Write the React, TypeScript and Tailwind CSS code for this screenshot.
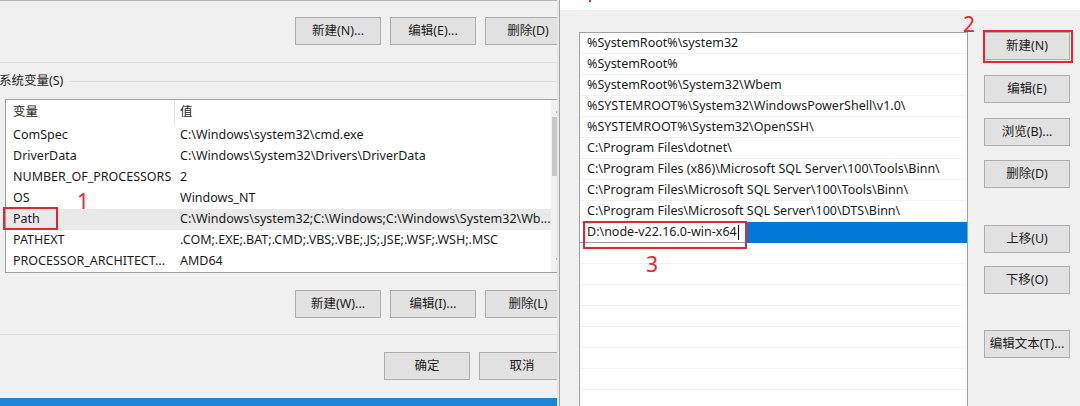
import React from 'react'

const sysVars: [string, string][] = [
  ['ComSpec', 'C:\\Windows\\system32\\cmd.exe'],
  ['DriverData', 'C:\\Windows\\System32\\Drivers\\DriverData'],
  ['NUMBER_OF_PROCESSORS', '2'],
  ['OS', 'Windows_NT'],
  ['Path', 'C:\\Windows\\system32;C:\\Windows;C:\\Windows\\System32\\Wb...'],
  ['PATHEXT', '.COM;.EXE;.BAT;.CMD;.VBS;.VBE;.JS;.JSE;.WSF;.WSH;.MSC'],
  ['PROCESSOR_ARCHITECT...', 'AMD64'],
]

const paths = [
  '%SystemRoot%\\system32',
  '%SystemRoot%',
  '%SystemRoot%\\System32\\Wbem',
  '%SYSTEMROOT%\\System32\\WindowsPowerShell\\v1.0\\',
  '%SYSTEMROOT%\\System32\\OpenSSH\\',
  'C:\\Program Files\\dotnet\\',
  'C:\\Program Files (x86)\\Microsoft SQL Server\\100\\Tools\\Binn\\',
  'C:\\Program Files\\Microsoft SQL Server\\100\\Tools\\Binn\\',
  'C:\\Program Files\\Microsoft SQL Server\\100\\DTS\\Binn\\',
]

function Btn({ label, className = '' }: { label: string; className?: string }) {
  return (
    <div
      className={`flex h-[28px] w-[86px] shrink-0 items-center justify-center border border-[#adadad] bg-[#e1e1e1] text-[12.5px] text-[#1b1b1b] ${className}`}
    >
      {label}
    </div>
  )
}

function Mark({ n, className }: { n: string; className: string }) {
  return (
    <span className={`absolute text-[21px] leading-none text-[#e5262c] ${className}`}>{n}</span>
  )
}

export default function App() {
  return (
    <div className="relative flex h-[406px] w-[1080px] overflow-hidden bg-[#f0f0f0] font-['Noto_Sans','Noto_Sans_CJK_SC',sans-serif] text-[12.5px] text-[#1b1b1b]">
      {/* left: environment variables dialog */}
      <div className="flex h-[406px] w-[557px] shrink-0 flex-col overflow-hidden border-t border-[#b4b4b4]">
        <div className="flex w-[600px] flex-1 flex-col">
          <div className="mt-[16px] flex shrink-0 gap-[9px] pl-[295px]">
            <Btn label="新建(N)..." className="h-[27px]" />
            <Btn label="编辑(E)..." className="h-[27px]" />
            <Btn label="删除(D)" className="h-[27px]" />
          </div>
          <div className="mt-[17px] h-px shrink-0 bg-[#dedede]" />
          <div className="mt-[10px] flex h-[16px] shrink-0 items-center">
            <span className="ml-[-1px] whitespace-nowrap leading-[16px]">系统变量(S)</span>
            <div className="ml-[6px] h-px flex-1 bg-[#dcdcdc]" />
          </div>

          <div className="ml-[5px] mt-[10px] flex h-[174px] w-[566px] shrink-0 border border-[#a0a0a0] bg-white">
            <div className="w-[545px] shrink-0">
              <div className="flex h-[25px] items-center">
                <div className="w-[168px] pl-[7px]">变量</div>
                <div className="h-full w-px bg-[#e5e5e5]" />
                <div className="pl-[5px]">值</div>
              </div>
              {sysVars.map(([k, v]) => (
                <div
                  key={k}
                  className={`flex h-[21px] items-center whitespace-nowrap ${k === 'Path' ? 'bg-[#e9e9e9]' : ''}`}
                >
                  <div className="w-[169px] pl-[7px]">{k}</div>
                  <div className="pl-[5px]">{v}</div>
                </div>
              ))}
            </div>
            <div className="flex w-[17px] flex-col bg-[#f0f0f0]">
              <div className="flex h-[17px] items-end justify-center pb-[4px]">
                <svg width="8" height="5" viewBox="0 0 8 5">
                  <path d="M0.5 4.5 L4 1 L7.5 4.5" stroke="#606060" fill="none" strokeWidth="1.2" />
                </svg>
              </div>
              <div className="mx-[1px] h-[59px] bg-[#c8c8c8]" />
              <div className="flex-1" />
              <div className="flex h-[17px] items-start justify-center pt-[3px]">
                <svg width="8" height="5" viewBox="0 0 8 5">
                  <path d="M0.5 0.5 L4 4 L7.5 0.5" stroke="#606060" fill="none" strokeWidth="1.2" />
                </svg>
              </div>
            </div>
          </div>

          <div className="mt-[17px] flex shrink-0 gap-[9px] pl-[295px]">
            <Btn label="新建(W)..." />
            <Btn label="编辑(I)..." />
            <Btn label="删除(L)" />
          </div>
          <div className="mt-[16px] h-px shrink-0 bg-[#dedede]" />
          <div className="mt-[17px] flex shrink-0 gap-[9px] pl-[384px]">
            <Btn label="确定" />
            <Btn label="取消" />
          </div>
        </div>
        <div className="h-[8px] shrink-0 bg-[#1b84d6]" />
      </div>
      <div className="w-[2px] shrink-0 bg-[#e8e8e8]" />
      <div className="w-px shrink-0 bg-[#a3a3a3]" />

      {/* right: edit environment variable dialog */}
      <div className="flex flex-1 flex-col overflow-hidden">
        <div className="h-[10px] shrink-0 bg-white" />
        <div className="flex shrink-0">
          <div className="ml-[19px] mt-[22px] h-[380px] w-[389px] shrink-0 border border-[#a0a0a0] bg-white">
            {paths.map((p) => (
              <div key={p} className="flex h-[21px] items-center whitespace-nowrap border-b border-[#f0f0f0] pl-[7px]">
                {p}
              </div>
            ))}
            <div className="flex h-[21px] bg-[#0078d7]">
              <div className="flex h-[21px] w-[165px] items-center border-b border-[#9a9a9a] bg-white pl-[7px]">
                <span className="whitespace-nowrap">D:\node-v22.16.0-win-x64</span>
                <span className="ml-[1px] h-[15px] w-px bg-black" />
              </div>
            </div>
            {Array.from({ length: 8 }).map((_, i) => (
              <div key={i} className="h-[21px] border-b border-[#f0f0f0]" />
            ))}
          </div>
          <div className="ml-[16px] mt-[22px] flex flex-col">
            <Btn label="新建(N)" />
            <Btn label="编辑(E)" className="mt-[15px] h-[27px]" />
            <Btn label="浏览(B)..." className="mt-[15px]" />
            <Btn label="删除(D)" className="mt-[14px] h-[27px]" />
            <Btn label="上移(U)" className="mt-[37px]" />
            <Btn label="下移(O)" className="mt-[13px]" />
            <Btn label="编辑文本(T)..." className="mt-[36px]" />
          </div>
        </div>
      </div>

      {/* red annotations */}
      <div className="absolute left-[589px] top-0 h-[2px] w-[2px] bg-[#e5262c]" />
      <div className="absolute left-[3px] top-[207px] h-[23px] w-[55px] border-2 border-[#e5262c]" />
      <Mark n="1" className="left-[77px] top-[191px]" />
      <div className="absolute left-[983px] top-[30px] h-[33px] w-[90px] border-2 border-[#e5262c]" />
      <Mark n="2" className="left-[963px] top-[14px]" />
      <div className="absolute left-[583px] top-[221px] h-[28px] w-[164px] border-2 border-[#e5262c]" />
      <Mark n="3" className="left-[646px] top-[254px]" />
    </div>
  )
}
